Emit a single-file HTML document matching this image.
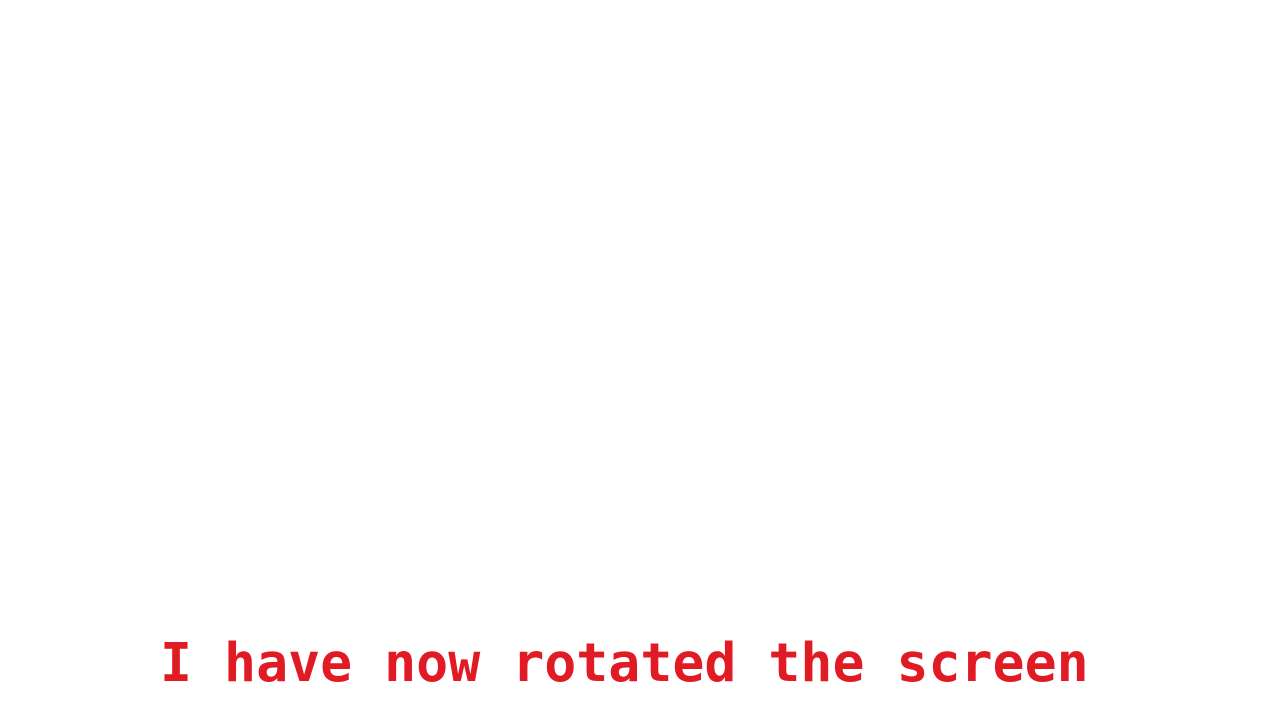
<!DOCTYPE html>
<html>
<head>
<meta charset="utf-8">
<style>
  html, body { margin: 0; padding: 0; background: #ffffff; width: 1280px; height: 720px; overflow: hidden; }
  .t {
    position: absolute;
    left: 160px;
    top: 632px;
    font-family: "DejaVu Sans Mono", "Liberation Mono", monospace;
    font-weight: bold;
    font-size: 53.2px;
    color: #e01b24;
    white-space: pre;
    line-height: normal;
  }
</style>
</head>
<body>
<div class="t">I have now rotated the screen</div>
</body>
</html>
